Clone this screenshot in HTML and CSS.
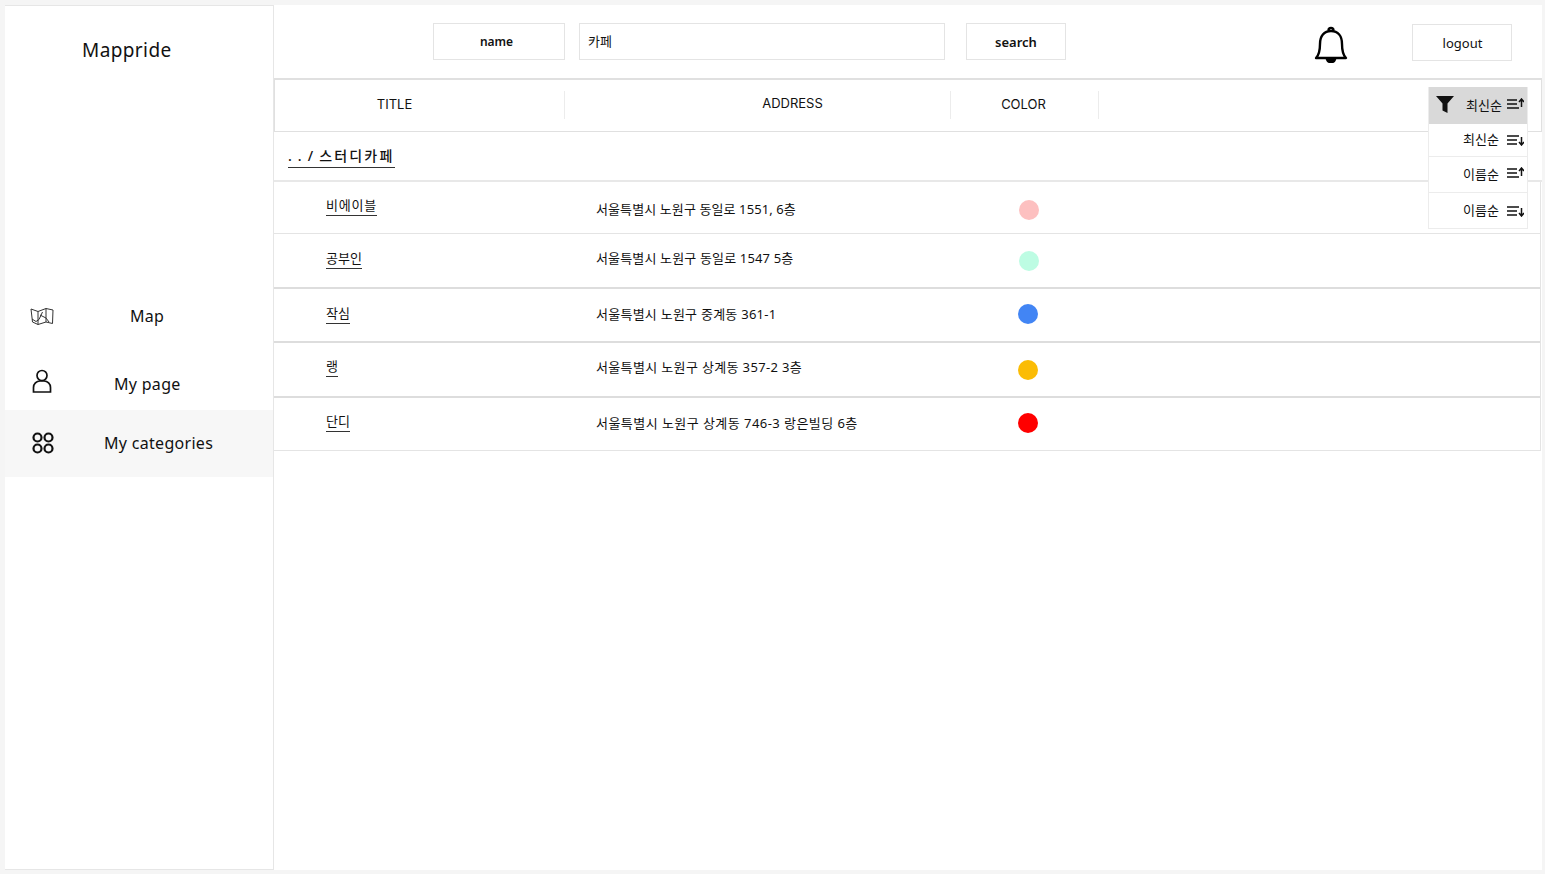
FILE: index.html
```html
<!DOCTYPE html>
<html lang="ko">
<head>
<meta charset="utf-8">
<title>Mappride</title>
<link rel="stylesheet" href="styles.css">
</head>
<body>
<div class="app">
  <aside class="sidebar">
    <h1 class="brand">Mappride</h1>
    <nav class="nav">
      <a class="nav-item nav-map">
        <svg class="nav-icon" viewBox="0 0 24 19" width="24" height="19" fill="none" stroke="#333" stroke-width="1" stroke-linejoin="round"><path d="M1 2 8 4.500 16 1.500 23 3 22.500 16.500 16 15 8 17.500 2.500 15z"/><path d="M8 4.500V17.500M16 1.500V15M2 12l4 2.500 3-2 3.500-7.500M10 8l6 3 3 4"/></svg>
        <span class="nav-label label-map">Map</span>
      </a>
      <a class="nav-item nav-page">
        <svg class="nav-icon" viewBox="0 0 20 24" width="20" height="24" fill="none" stroke="#111" stroke-width="1.700"><circle cx="10" cy="6.500" r="5"/><path d="M1.500 23v-4.500a6.500 6.500 0 0 1 6.500-6.500h4a6.500 6.500 0 0 1 6.500 6.500V23z"/></svg>
        <span class="nav-label label-page">My page</span>
      </a>
      <a class="nav-item nav-cat">
        <svg class="nav-icon" viewBox="0 0 22 22" width="22" height="22" fill="none" stroke="#111" stroke-width="2.200"><circle cx="5.500" cy="5.500" r="4"/><circle cx="16.500" cy="5.500" r="4"/><circle cx="5.500" cy="16.500" r="4"/><circle cx="16.500" cy="16.500" r="4"/></svg>
        <span class="nav-label label-cat">My categories</span>
      </a>
    </nav>
  </aside>
  <main class="main">
    <header class="topbar">
      <div class="box box-name">name</div>
      <div class="box box-input">카페</div>
      <div class="box box-search">search</div>
      <svg class="bell" viewBox="0 0 34 38" width="34" height="38" fill="none" stroke="#000" stroke-width="2.400" stroke-linejoin="round"><path d="M2 33c3-3 4-6 4-14C6 11 10 6 17 6s11 5 11 13c0 8 1 11 4 14z"/><path d="M14.500 5.500a2.500 2.500 0 0 1 5 0"/><path d="M13 34.500h8c-1 3.500-7 3.500-8 0z" fill="#000"/></svg>
      <div class="box box-logout">logout</div>
    </header>
    <div class="thead">
      <div class="th th-title">TITLE</div>
      <div class="th th-address">ADDRESS</div>
      <div class="th th-color">COLOR</div>
    </div>
    <div class="crumb-row"><span class="crumb">. . / 스터디카페</span></div>
    <div class="rows">
      <div class="row row-a">
        <div class="cell-title"><span class="link">비에이블</span></div>
        <div class="cell-address">서울특별시 노원구 동일로 1551, 6층</div>
        <div class="cell-color"><span class="dot dot-pink"></span></div>
      </div>
      <div class="row row-b">
        <div class="cell-title"><span class="link">공부인</span></div>
        <div class="cell-address">서울특별시 노원구 동일로 1547 5층</div>
        <div class="cell-color"><span class="dot dot-mint"></span></div>
      </div>
      <div class="row row-c">
        <div class="cell-title"><span class="link">작심</span></div>
        <div class="cell-address">서울특별시 노원구 중계동 361-1</div>
        <div class="cell-color"><span class="dot dot-blue"></span></div>
      </div>
      <div class="row row-d">
        <div class="cell-title"><span class="link">랭</span></div>
        <div class="cell-address">서울특별시 노원구 상계동 357-2 3층</div>
        <div class="cell-color"><span class="dot dot-amber"></span></div>
      </div>
      <div class="row row-e">
        <div class="cell-title"><span class="link">단디</span></div>
        <div class="cell-address">서울특별시 노원구 상계동 746-3 랑은빌딩 6층</div>
        <div class="cell-color"><span class="dot dot-red"></span></div>
      </div>
    </div>
    <div class="sort-menu">
      <div class="sort-item sort-head">
        <svg class="funnel" viewBox="0 0 18 17" width="18" height="17"><path d="M0 0h18l-6.500 7.500V17l-5-2.500V7.500z" fill="#111"/></svg>
        <span class="sort-text">최신순</span>
        <svg class="sort-icon" viewBox="0 0 17 12" width="17" height="12" fill="none" stroke="#111" stroke-width="1.500"><path d="M0 2h10M0 6h10M0 10h12"/><path d="M14.500 9V2M12 4l2.500-3L17 4"/></svg>
      </div>
      <div class="sort-item sort-2">
        <span class="sort-text">최신순</span>
        <svg class="sort-icon" viewBox="0 0 17 12" width="17" height="12" fill="none" stroke="#111" stroke-width="1.500"><path d="M0 2h12M0 6h10M0 10h10"/><path d="M14.500 3v7M12 8l2.500 3L17 8"/></svg>
      </div>
      <div class="sort-item sort-3">
        <span class="sort-text">이름순</span>
        <svg class="sort-icon" viewBox="0 0 17 12" width="17" height="12" fill="none" stroke="#111" stroke-width="1.500"><path d="M0 2h10M0 6h10M0 10h12"/><path d="M14.500 9V2M12 4l2.500-3L17 4"/></svg>
      </div>
      <div class="sort-item sort-4">
        <span class="sort-text">이름순</span>
        <svg class="sort-icon" viewBox="0 0 17 12" width="17" height="12" fill="none" stroke="#111" stroke-width="1.500"><path d="M0 2h12M0 6h10M0 10h10"/><path d="M14.500 3v7M12 8l2.500 3L17 8"/></svg>
      </div>
    </div>
  </main>
</div>
</body>
</html>
```
FILE: styles.css
```css
* { box-sizing: border-box; }
html, body { height: 100%; }
body {
  margin: 0;
  background: #f5f5f5;
  color: #111;
  font-family: "Noto Sans", "Noto Sans CJK KR", sans-serif;
  overflow: hidden;
}
.app {
  display: flex;
  height: 865px;
  margin: 5px 3px 0 5px;
  background: #fff;
}
.sidebar {
  width: 269px;
  flex: none;
  background: #fff;
  border: 1px solid #e6e6e6;
  border-width: 1px 1px 1px 0;
}
.brand {
  margin: 0;
  padding-top: 31px;
  padding-left: 77px;
  font-size: 19px;
  line-height: 26px;
  font-weight: 400;
  letter-spacing: 0.4px;
}
.nav { margin-top: 221px; }
.nav-item {
  display: flex;
  align-items: center;
  font-size: 16px;
  letter-spacing: 0.3px;
}
.nav-map { height: 64px; padding-left: 25px; }
.nav-page { height: 62px; padding-left: 27px; padding-top: 4px; }
.nav-cat { height: 67px; padding-left: 27px; padding-bottom: 2px; background: #f7f7f7; }
.label-map { margin-left: 76px; }
.label-page { margin-left: 62px; margin-top: 5px; }
.label-cat { margin-left: 50px; }
.main { flex: 1; position: relative; min-width: 0; }
.topbar {
  display: flex;
  align-items: flex-start;
  height: 73px;
  padding-top: 18px;
  padding-left: 159px;
}
.box {
  display: flex;
  align-items: center;
  justify-content: center;
  height: 37px;
  border: 1px solid #e4e4e4;
  font-size: 13px;
  font-weight: 600;
}
.box-name { width: 132px; padding-right: 5px; padding-bottom: 1px; font-size: 12px; }
.box-input { width: 366px; margin-left: 14px; justify-content: flex-start; padding-left: 8px; padding-bottom: 2px; font-weight: 400; }
.box-search { width: 100px; margin-left: 21px; }
.bell { margin-left: 248px; margin-top: 2px; }
.box-logout { width: 100px; margin-left: 64px; margin-top: 1px; padding-left: 1px; font-weight: 400; }
.thead {
  display: flex;
  align-items: center;
  height: 54px;
  padding-bottom: 2px;
  border: 1px solid #e0e0e0;
  border-top-width: 2px;
  font-family: "Inter", "Noto Sans", sans-serif;
  font-size: 13px;
}
.th { height: 28px; padding-bottom: 2px; display: flex; align-items: center; justify-content: center; border-right: 1px solid #ececec; }
.th-title { width: 290px; padding-right: 50px; }
.th-address { width: 386px; padding-left: 70px; padding-bottom: 3px; }
.th-color { width: 148px; padding-right: 2px; padding-bottom: 1px; }
.crumb-row { height: 50px; padding: 12px 0 0 14px; border-bottom: 2px solid #e8e8e8; }
.crumb { display: inline-block; font-size: 14px; line-height: 22px; letter-spacing: 2.200px; word-spacing: -2px; border-bottom: 1px solid #333; font-weight: 500; width: 107px; white-space: nowrap; }
.rows { margin-right: 1px; border-right: 1px solid #e4e4e4; }
.row { display: flex; border-bottom: 1px solid #e4e4e4; }
.row-a { height: 52px; }
.row-b { height: 55px; border-bottom-width: 2px; border-bottom-color: #ddd; }
.row-c { height: 54px; border-bottom-width: 2px; border-bottom-color: #ddd; }
.row-d { height: 55px; border-bottom-width: 2px; border-bottom-color: #ddd; }
.row-e { height: 53px; }
.cell-title { width: 322px; padding: 11px 0 0 52px; }
.link { display: inline-block; font-size: 13px; line-height: 19px; border-bottom: 1px solid #333; }
.row-a .link { letter-spacing: 0.750px; }
.row-b .cell-title, .row-c .cell-title { padding-top: 12px; }
.cell-address { width: 421px; padding-top: 18px; font-size: 13px; line-height: 18px; }
.row-a .cell-address { letter-spacing: 0.100px; }
.row-b .cell-address { padding-top: 15px; letter-spacing: 0.150px; }
.row-c .cell-address { padding-top: 16px; letter-spacing: 0.250px; }
.row-d .cell-address { padding-top: 15px; letter-spacing: 0.350px; }
.row-e .cell-address { padding-top: 16px; letter-spacing: 0.450px; }
.cell-color { padding: 18px 0 0 2px; }
.row-b .cell-color { padding-top: 17px; }
.row-c .cell-color { padding: 15px 0 0 1px; }
.row-d .cell-color { padding: 17px 0 0 1px; }
.row-e .cell-color { padding: 15px 0 0 1px; }
.dot { display: block; width: 20px; height: 20px; border-radius: 50%; }
.dot-pink { background: #fdc0c0; }
.dot-mint { background: #bdfce3; }
.dot-blue { background: #4285f4; }
.dot-amber { background: #fbbc05; }
.dot-red { background: #ff0000; }
.sort-menu {
  position: absolute;
  top: 82px;
  left: 1154px;
  width: 100px;
  background: #fff;
  border: 1px solid #ececec;
  border-top: 0;
  font-family: "Noto Sans CJK KR", sans-serif;
  font-size: 13px;
}
.sort-item {
  display: flex;
  align-items: center;
  justify-content: flex-end;
  padding-right: 3px;
  border-bottom: 1px solid #ececec;
}
.sort-item:last-child { border-bottom: 0; }
.sort-text { margin-top: -3px; }
.sort-head { height: 37px; background: #d9d9d9; border-bottom: 0; }
.sort-2 { height: 33px; }
.sort-3 { height: 36px; }
.sort-4 { height: 35px; }
.funnel { margin-right: auto; margin-left: 7px; margin-top: -3px; }
.sort-icon { margin-left: 5px; }
.sort-2 .sort-icon, .sort-3 .sort-icon, .sort-4 .sort-icon { margin-left: 8px; }
.sort-head .sort-icon, .sort-3 .sort-icon { margin-top: -3px; }
```
